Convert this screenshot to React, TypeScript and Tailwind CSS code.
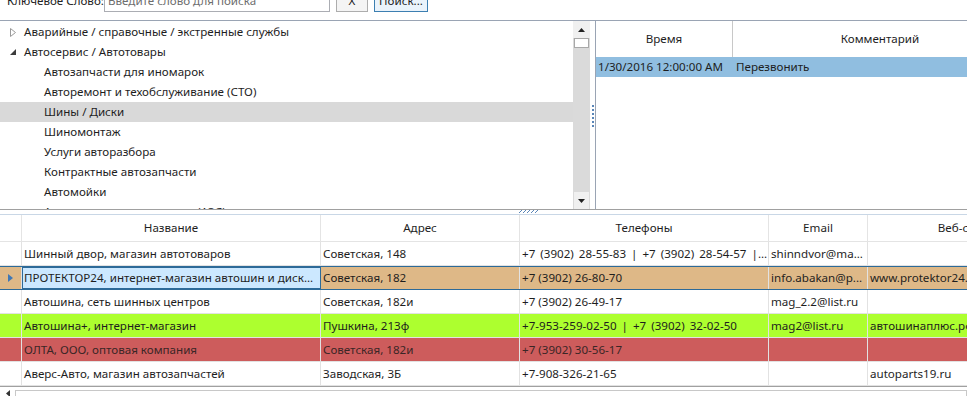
import React from 'react'

const treeRows = [
  { text: 'Аварийные / справочные / экстренные службы', level: 0, state: 'collapsed' },
  { text: 'Автосервис / Автотовары', level: 0, state: 'expanded' },
  { text: 'Автозапчасти для иномарок', level: 1 },
  { text: 'Авторемонт и техобслуживание (СТО)', level: 1 },
  { text: 'Шины / Диски', level: 1, selected: true },
  { text: 'Шиномонтаж', level: 1 },
  { text: 'Услуги авторазбора', level: 1 },
  { text: 'Контрактные автозапчасти', level: 1 },
  { text: 'Автомойки', level: 1 },
  { text: 'Автозаправочные станции (АЗС)', level: 1 },
]

const columns = [
  { title: 'Название', w: 'w-[299px]' },
  { title: 'Адрес', w: 'w-[199px]' },
  { title: 'Телефоны', w: 'w-[249px]' },
  { title: 'Email', w: 'w-[99px]' },
  { title: 'Веб-сайт', w: 'w-[190px]' },
]

type Row = {
  cells: string[]
  bg: string
  text?: string
  current?: boolean
  wide?: boolean
}

const rows: Row[] = [
  {
    cells: ['Шинный двор, магазин автотоваров', 'Советская, 148', '+7 (3902) 28-55-83 | +7 (3902) 28-54-57 |...', 'shinndvor@ma...', ''],
    bg: 'bg-white',
    wide: true,
  },
  {
    cells: ['ПРОТЕКТОР24, интернет-магазин автошин и диск...', 'Советская, 182', '+7 (3902) 26-80-70', 'info.abakan@p...', 'www.protektor24.ru'],
    bg: 'bg-[#deb887]',
    current: true,
  },
  {
    cells: ['Автошина, сеть шинных центров', 'Советская, 182и', '+7 (3902) 26-49-17', 'mag_2.2@list.ru', ''],
    bg: 'bg-white',
  },
  {
    cells: ['Автошина+, интернет-магазин', 'Пушкина, 213ф', '+7-953-259-02-50 | +7 (3902) 32-02-50', 'mag2@list.ru', 'автошинаплюс.рф'],
    bg: 'bg-[#adff2f]',
    wide: true,
  },
  {
    cells: ['ОЛТА, ООО, оптовая компания', 'Советская, 182и', '+7 (3902) 30-56-17', '', ''],
    bg: 'bg-[#cd5c5c]',
    text: 'text-[#3a2626]',
  },
  {
    cells: ['Аверс-Авто, магазин автозапчастей', 'Заводская, 3Б', '+7-908-326-21-65', '', 'autoparts19.ru'],
    bg: 'bg-white',
  },
]

const Tri = ({ dir, className }: { dir: 'up' | 'down' | 'left' | 'right'; className?: string }) => {
  const pts = {
    up: '0,4 3.5,0 7,4',
    down: '0,0 7,0 3.5,4',
    left: '4,0 4,7 0,3.5',
    right: '0,0 0,8 5,4',
  }[dir]
  const box = dir === 'up' || dir === 'down' ? '0 0 7 4' : dir === 'left' ? '0 0 4 7' : '0 0 5 8'
  const [, , w, h] = box.split(' ').map(Number)
  return (
    <svg width={w} height={h} viewBox={box} className={className}>
      <polygon points={pts} fill="currentColor" />
    </svg>
  )
}

// little grip marks on the splitters
const Grip = ({ vertical }: { vertical?: boolean }) => (
  <div className={vertical ? 'flex flex-col gap-[2px]' : 'flex gap-[1px]'}>
    {Array.from({ length: vertical ? 6 : 5 }).map((_, i) =>
      vertical ? (
        <div key={i} className="w-[2px] h-[2px] bg-[#5a86b8]" />
      ) : (
        <svg key={i} width="3" height="3" viewBox="0 0 3 3">
          <line x1="0" y1="3" x2="3" y2="0" stroke="#5a86b8" strokeWidth="1" />
        </svg>
      )
    )}
  </div>
)

export default function App() {
  return (
    <div className="w-[967px] h-[396px] overflow-hidden bg-white text-[11.6px] text-[#1e1e1e] font-['Noto_Sans',sans-serif] flex flex-col">
      {/* toolbar, scrolled slightly off the top */}
      <div className="h-[21px] shrink-0 overflow-hidden border-b border-[#9aa4b4]">
        <div className="flex items-center h-[22px] -mt-[10px] pl-[7px] whitespace-nowrap">
          <span className="w-[97px] shrink-0 text-[#222]">Ключевое Слово:</span>
          <div className="w-[226px] shrink-0 h-[22px] border border-[#abadb3] px-[3px] flex items-center text-[#6d6d6d]">
            Введите слово для поиска
          </div>
          <div className="ml-[6px] w-[32px] shrink-0 h-[21px] border border-[#adadad] bg-[#f4f4f4] flex items-center justify-center">
            X
          </div>
          <div className="ml-[6px] w-[54px] shrink-0 h-[21px] border border-[#3c7fb1] bg-[#eaf3fb] flex items-center justify-center">
            Поиск...
          </div>
        </div>
      </div>

      {/* upper split */}
      <div className="h-[189px] shrink-0 flex border-b border-[#a0a0a0]">
        <div className="w-[590px] shrink-0 flex">
          <div className="w-[573px] pt-px overflow-hidden">
            {treeRows.map((r, i) => (
              <div
                key={i}
                className={`h-[20px] flex items-center whitespace-nowrap ${r.selected ? 'bg-[#d9d9d9]' : ''}`}
              >
                <div className="w-[24px] flex justify-center shrink-0 pl-[1px]">
                  {r.state === 'collapsed' && (
                    <svg width="6" height="9" viewBox="0 0 6 9">
                      <polygon points="0.5,0.5 0.5,8.5 5.5,4.5" fill="none" stroke="#9a9a9a" />
                    </svg>
                  )}
                  {r.state === 'expanded' && (
                    <svg width="6" height="6" viewBox="0 0 6 6">
                      <polygon points="6,0 6,6 0,6" fill="#3c3c3c" />
                    </svg>
                  )}
                </div>
                <span className={r.level === 1 ? 'pl-[20px]' : ''}>{r.text}</span>
              </div>
            ))}
          </div>
          <div className="w-[17px] bg-[#dadada] flex flex-col">
            <div className="h-[17px] bg-[#f0f0f0] flex items-center justify-center text-[#222]">
              <Tri dir="up" />
            </div>
            <div className="h-[10px] mx-px bg-white border border-[#a8a8a8]" />
            <div className="flex-1" />
            <div className="h-[17px] mx-px bg-[#f0f0f0] flex items-center justify-center text-[#222]">
              <Tri dir="down" />
            </div>
          </div>
        </div>
        <div className="w-[5px] shrink-0 flex items-start justify-center pt-[84px]">
          <Grip vertical />
        </div>
        <div className="flex-1 border-l border-[#9aa4b4] flex flex-col overflow-hidden">
          <div className="h-[36px] flex">
            <div className="w-[137px] shrink-0 border-r border-[#c8c8c8] flex items-center justify-center">Время</div>
            <div className="w-[294px] shrink-0 flex items-center justify-center">Комментарий</div>
          </div>
          <div className="h-[20px] bg-[#90bee0] flex items-center whitespace-nowrap">
            <span className="w-[137px] shrink-0 pl-[2px]">1/30/2016 12:00:00 AM</span>
            <span className="pl-[3px]">Перезвонить</span>
          </div>
        </div>
      </div>

      {/* horizontal splitter */}
      <div className="h-[4px] shrink-0 flex items-start pl-[519px]">
        <Grip />
      </div>

      {/* lower grid */}
      <div className="flex-1 flex flex-col border-t border-[#c9d7e6] overflow-hidden">
        <div className="h-[27px] shrink-0 flex border-b border-[#e4e4e4]">
          <div className="w-[22px] shrink-0 border-r border-[#e4e4e4]" />
          {columns.map((c) => (
            <div
              key={c.title}
              className={`${c.w} shrink-0 border-r border-[#e4e4e4] flex items-center justify-center whitespace-nowrap`}
            >
              {c.title}
            </div>
          ))}
        </div>
        {rows.map((r, i) => (
          <div
            key={i}
            className={`h-[24px] shrink-0 flex ${r.bg} ${r.text ?? ''} ${
              r.current ? 'border-y border-[#2d6a98]' : 'border-b border-[#e2e2e2]'
            }`}
          >
            <div className="w-[22px] shrink-0 border-r border-[#e2e2e2] flex items-center pl-[8px] text-[#3f77b5]">
              {r.current && <Tri dir="right" />}
            </div>
            {r.cells.map((cell, j) => (
              <div
                key={j}
                className={`${columns[j].w} shrink-0 flex items-center overflow-hidden whitespace-nowrap border-r ${
                  r.current && j === 0
                    ? 'bg-[#cce8ff] border-l border-y border-[#2d6a98] pl-[1px]'
                    : 'border-[#e2e2e2] pl-[2px]'
                } ${j === 2 && r.wide ? '[word-spacing:2px]' : ''}`}
              >
                {cell}
              </div>
            ))}
          </div>
        ))}
        <div className="flex-1 border-t border-[#a0a0a0] flex items-start pt-[3px]">
          <div className="w-[15px] flex justify-center pl-[1px] text-[#333]">
            <Tri dir="left" />
          </div>
          <div className="flex-1 h-[10px] border border-[#c8c8c8] bg-white" />
        </div>
      </div>
    </div>
  )
}
